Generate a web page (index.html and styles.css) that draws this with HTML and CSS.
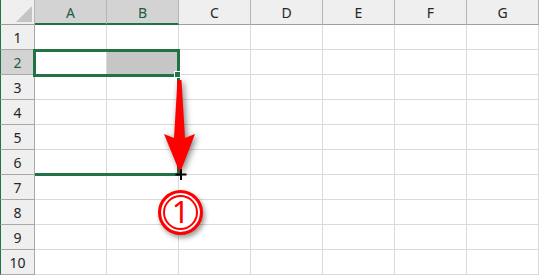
FILE: index.html
```html
<!DOCTYPE html>
<html lang="ja">
<head>
    <meta charset="UTF-8">
    <meta name="viewport" content="width=device-width, initial-scale=1.0">
    <title>Fill drag</title>
    <link rel="stylesheet" href="styles.css">
</head>
<body>
    <div class="sheet">
        <div class="grid">
            <!-- header row -->
            <div class="corner"><span class="corner-tri"></span></div>
            <div class="col-head on">A</div>
            <div class="col-head on">B</div>
            <div class="col-head">C</div>
            <div class="col-head">D</div>
            <div class="col-head">E</div>
            <div class="col-head">F</div>
            <div class="col-head">G</div>

            <div class="row-head">1</div>
            <div class="cell"></div><div class="cell"></div><div class="cell"></div><div class="cell"></div><div class="cell"></div><div class="cell"></div><div class="cell"></div>

            <div class="row-head on">2</div>
            <div class="cell"></div><div class="cell fill"></div><div class="cell"></div><div class="cell"></div><div class="cell"></div><div class="cell"></div><div class="cell"></div>

            <div class="row-head">3</div>
            <div class="cell"></div><div class="cell"></div><div class="cell"></div><div class="cell"></div><div class="cell"></div><div class="cell"></div><div class="cell"></div>

            <div class="row-head">4</div>
            <div class="cell"></div><div class="cell"></div><div class="cell"></div><div class="cell"></div><div class="cell"></div><div class="cell"></div><div class="cell"></div>

            <div class="row-head">5</div>
            <div class="cell"></div><div class="cell"></div><div class="cell"></div><div class="cell"></div><div class="cell"></div><div class="cell"></div><div class="cell"></div>

            <div class="row-head">6</div>
            <div class="cell"></div><div class="cell"></div><div class="cell"></div><div class="cell"></div><div class="cell"></div><div class="cell"></div><div class="cell"></div>

            <div class="row-head">7</div>
            <div class="cell"></div><div class="cell"></div><div class="cell"></div><div class="cell"></div><div class="cell"></div><div class="cell"></div><div class="cell"></div>

            <div class="row-head">8</div>
            <div class="cell"></div><div class="cell"></div><div class="cell"></div><div class="cell"></div><div class="cell"></div><div class="cell"></div><div class="cell"></div>

            <div class="row-head">9</div>
            <div class="cell"></div><div class="cell"></div><div class="cell"></div><div class="cell"></div><div class="cell"></div><div class="cell"></div><div class="cell"></div>

            <div class="row-head">10</div>
            <div class="cell"></div><div class="cell"></div><div class="cell"></div><div class="cell"></div><div class="cell"></div><div class="cell"></div><div class="cell"></div>
        </div>

        <!-- selection A2:B2 and the drag outline down to row 6 -->
        <div class="selection"></div>
        <div class="drag-right"></div>
        <div class="drag-bottom"></div>
        <div class="handle"></div>

        <!-- red arrow + cursor -->
        <svg class="annot" width="540" height="276" viewBox="0 0 540 276">
            <polygon class="arrow" points="177.5,80 181.5,80 185,138 195,134 180,173 164,134 174,138"/>
            <g class="cursor">
                <line x1="175.5" y1="174.5" x2="186.5" y2="174.5"/>
                <line x1="181" y1="169" x2="181" y2="180"/>
            </g>
        </svg>

        <div class="badge"><span>1</span></div>
    </div>
</body>
</html>
```

FILE: styles.css
```css
* {
    margin: 0;
    padding: 0;
    box-sizing: border-box;
}

body {
    background: #fff;
    font-family: 'Noto Sans', 'Liberation Sans', sans-serif;
}

.sheet {
    position: relative;
    width: 540px;
    height: 276px;
    overflow: hidden;
}

.grid {
    display: grid;
    grid-template-columns: 35px repeat(7, 72px);
    grid-auto-rows: 25px;
}

.corner {
    position: relative;
    background: #efefef;
    border-left: 1px solid #217346;
    border-right: 1px solid #b5b5b5;
    border-bottom: 1px solid #9e9e9e;
}

.corner-tri {
    position: absolute;
    right: 2px;
    bottom: 2px;
    width: 0;
    height: 0;
    border-left: 16px solid transparent;
    border-bottom: 16px solid #c4c4c4;
}

.col-head {
    background: #efefef;
    border-right: 1px solid #b5b5b5;
    border-bottom: 1px solid #9e9e9e;
    color: #262626;
    font-size: 14px;
    display: flex;
    align-items: center;
    justify-content: center;
    padding-top: 1px;
}

.col-head.on {
    background: #d3d3d3;
    color: #1d5c3d;
    border-bottom: 2px solid #217346;
}

.row-head {
    background: #efefef;
    border-left: 1px solid #217346;
    border-right: 1px solid #a8a8a8;
    border-bottom: 1px solid #a8a8a8;
    color: #262626;
    font-size: 14px;
    display: flex;
    align-items: center;
    justify-content: center;
}

.row-head.on {
    background: #d3d3d3;
    color: #1d5c3d;
}

.cell {
    border-right: 1px solid #dadada;
    border-bottom: 1px solid #dadada;
}

.cell.fill {
    background: #c6c6c6;
}

.selection {
    position: absolute;
    left: 33px;
    top: 49px;
    width: 147px;
    height: 28px;
    border: 3px solid #217346;
}

.drag-right {
    position: absolute;
    left: 177px;
    top: 77px;
    width: 3px;
    height: 99px;
    background: #217346;
}

.drag-bottom {
    position: absolute;
    left: 35px;
    top: 173px;
    width: 142px;
    height: 3px;
    background: #217346;
}

.handle {
    position: absolute;
    left: 174px;
    top: 71px;
    width: 7px;
    height: 7px;
    background: #217346;
    border: 1px solid #fff;
}

.annot {
    position: absolute;
    left: 0;
    top: 0;
    pointer-events: none;
}

.arrow {
    fill: #ff0000;
    filter: drop-shadow(2px 2px 3px rgba(0, 0, 0, 0.5));
}

.cursor line {
    stroke: #000;
    stroke-width: 2;
}

.badge {
    position: absolute;
    left: 158px;
    top: 190px;
    width: 45px;
    height: 45px;
    border-radius: 50%;
    background: #fff;
    border: 3px solid #ff0000;
    box-shadow: inset 0 0 0 2px #fff, inset 0 0 0 4px #ff0000, 2px 3px 5px rgba(0, 0, 0, 0.4);
    display: flex;
    align-items: center;
    justify-content: center;
}

.badge span {
    color: #ff0000;
    font-family: 'Noto Sans', 'Liberation Sans', sans-serif;
    font-size: 31px;
    line-height: 1;
    padding-bottom: 2px;
}
```
